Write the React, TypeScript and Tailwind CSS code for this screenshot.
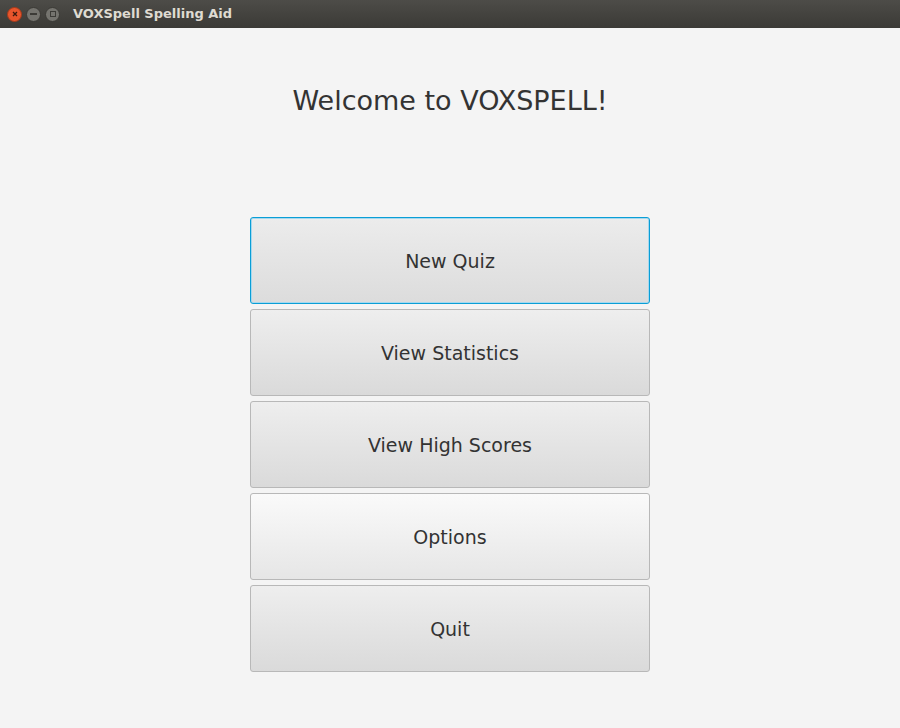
import React from "react";

const btnBase =
  "w-[400px] h-[87px] rounded-[3px] flex items-center justify-center pt-[2px] text-[19px] text-[#333333]";

export default function App() {
  const buttons = ["View Statistics", "View High Scores", "Options", "Quit"];
  return (
    <div className="w-[900px] h-[728px] bg-[#f4f4f4] flex flex-col overflow-hidden" style={{ fontFamily: '"DejaVu Sans", sans-serif' }}>
      <div className="h-[28px] flex items-center bg-gradient-to-b from-[#4d4c48] to-[#3b3a36] shrink-0">
        <div className="flex items-center gap-[4px] ml-[7px]">
          <div className="w-[15px] h-[15px] rounded-full bg-[#e9552c] border border-[#a53a1a] flex items-center justify-center">
            <svg width="8" height="8" viewBox="0 0 8 8">
              <path d="M2 2 L6 6 M6 2 L2 6" stroke="#3c1a0e" strokeWidth="1.3" />
            </svg>
          </div>
          <div className="w-[15px] h-[15px] rounded-full bg-[#75746f] border border-[#3a3935] flex items-center justify-center">
            <div className="w-[7px] h-[2px] bg-[#3c3b37]" />
          </div>
          <div className="w-[15px] h-[15px] rounded-full bg-[#75746f] border border-[#3a3935] flex items-center justify-center">
            <div className="w-[6px] h-[6px] border border-[#3c3b37]" />
          </div>
        </div>
        <span className="ml-[13px] text-[13px] font-bold text-[#dfdbd2]">VOXSpell Spelling Aid</span>
      </div>
      <div className="flex flex-col items-center">
        <div className="mt-[56px] h-[32px] flex items-center text-[27px] text-[#333333] leading-none">
          Welcome to VOXSPELL!
        </div>
        <div className="mt-[101px] flex flex-col gap-[5px]">
          <div className={`${btnBase} border border-[#0a9ed6] shadow-[inset_0_0_0_1px_#a6d8ee] bg-gradient-to-b from-[#ececec] to-[#dcdcdc]`}>
            New Quiz
          </div>
          {buttons.map((b) => (
            <div
              key={b}
              className={`${btnBase} border border-[#b8b8b8] ${
                b === "Options"
                  ? "bg-gradient-to-b from-[#fafafa] to-[#e6e6e6]"
                  : "bg-gradient-to-b from-[#eeeeee] to-[#dadada]"
              }`}
            >
              {b}
            </div>
          ))}
        </div>
      </div>
    </div>
  );
}
